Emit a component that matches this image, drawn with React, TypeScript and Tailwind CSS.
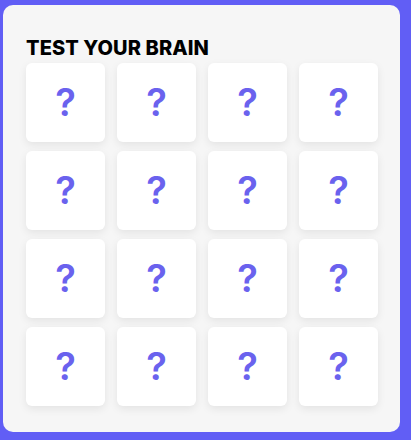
export default function App() {
  const tiles = Array.from({ length: 16 }, (_, i) => i);

  return (
    <div className="w-[411px] h-[440px] bg-[#615ef5] pt-[5px] pl-[3px]">
      <div
        className="w-[397px] h-[427px] bg-[#f6f6f6] rounded-[10px] pt-[31px] pl-[23px]"
        style={{ fontFamily: "Inter, 'Open Sans', sans-serif" }}
      >
        <h1 className="text-[20px] leading-[24px] font-extrabold text-black tracking-[0.1px]">
          TEST YOUR BRAIN
        </h1>
        <div className="grid grid-cols-[repeat(4,79px)] gap-x-[12px] gap-y-[9px] mt-[3px]">
          {tiles.map((t) => (
            <div
              key={t}
              className="w-[79px] h-[79px] bg-white rounded-[6px] shadow-[0_3px_8px_rgba(0,0,0,0.08)] flex items-center justify-center"
            >
              <span className="text-[38px] leading-none font-semibold text-[#6a62ee] -mt-[2px]">?</span>
            </div>
          ))}
        </div>
      </div>
    </div>
  );
}
